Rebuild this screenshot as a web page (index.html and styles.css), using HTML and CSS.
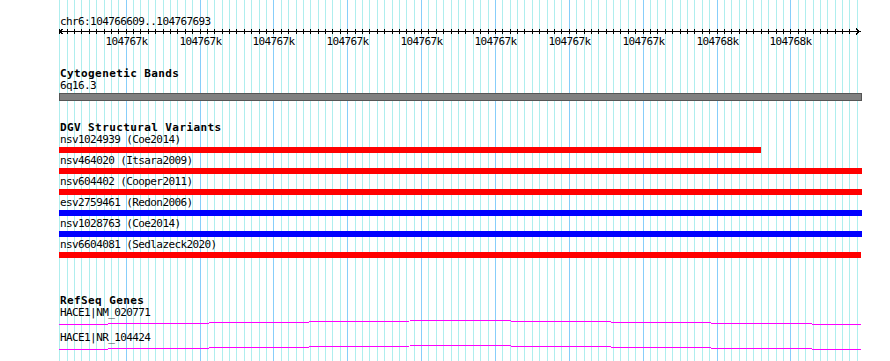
FILE: index.html
```html
<!DOCTYPE html>
<html lang="en">
<head>
    <meta charset="UTF-8">
    <title>chr6:104766609..104767693</title>
    <link rel="stylesheet" href="styles.css">
</head>
<body>
    <div class="panel" id="panel">
        <svg class="grid" id="grid" width="803" height="361"></svg>

        <div class="ruler">
            <div class="ruler-title">chr6:104766609..104767693</div>
            <svg class="axis" id="axis" width="803" height="22"></svg>
        </div>

        <section class="track track-cyto">
            <h2 class="track-title">Cytogenetic Bands</h2>
            <div class="feature">
                <div class="feature-label">6q16.3</div>
                <div class="band"></div>
            </div>
        </section>

        <section class="track track-dgv">
            <h2 class="track-title">DGV Structural Variants</h2>
            <div class="feature">
                <div class="feature-label">nsv1024939 (Coe2014)</div>
                <div class="bar bar-loss" style="width: 702px"></div>
            </div>
            <div class="feature">
                <div class="feature-label">nsv464020 (Itsara2009)</div>
                <div class="bar bar-loss" style="width: 803px"></div>
            </div>
            <div class="feature">
                <div class="feature-label">nsv604402 (Cooper2011)</div>
                <div class="bar bar-loss" style="width: 803px"></div>
            </div>
            <div class="feature">
                <div class="feature-label">esv2759461 (Redon2006)</div>
                <div class="bar bar-gain" style="width: 803px"></div>
            </div>
            <div class="feature">
                <div class="feature-label">nsv1028763 (Coe2014)</div>
                <div class="bar bar-gain" style="width: 803px"></div>
            </div>
            <div class="feature">
                <div class="feature-label">nsv6604081 (Sedlazeck2020)</div>
                <div class="bar bar-loss" style="width: 802px"></div>
            </div>
        </section>

        <section class="track track-refseq">
            <h2 class="track-title">RefSeq Genes</h2>
            <div class="feature">
                <div class="feature-label">HACE1|NM_020771</div>
                <svg class="intron" width="802" height="13">
                    <polyline points="0,5.5 401,1.5 802,5.5"></polyline>
                </svg>
            </div>
            <div class="feature">
                <div class="feature-label">HACE1|NR_104424</div>
                <svg class="intron" width="802" height="13">
                    <polyline points="0,5.5 401,1.5 802,5.5"></polyline>
                </svg>
            </div>
        </section>
    </div>

    <script src="script.js"></script>
</body>
</html>
```

FILE: styles.css
```css
* {
    box-sizing: border-box;
}

body {
    margin: 0;
    background-color: #fff;
    color: #000;
    font-family: "DejaVu Sans Mono", "Liberation Mono", monospace;
    font-size: 11px;
    letter-spacing: -0.6px;
    overflow: hidden;
}

.panel {
    position: relative;
    width: 803px;
    height: 361px;
    margin-left: 59px;
}

/* grid lines sit behind all tracks */
.grid {
    position: absolute;
    top: 0;
    left: 0;
    z-index: 0;
}

.grid line {
    stroke-width: 1;
    shape-rendering: crispEdges;
}

.grid .minor {
    stroke: #afeeee;
}

.grid .major {
    stroke: #87cefa;
}

.ruler,
.track {
    position: relative;
    z-index: 1;
}

.ruler-title {
    padding-top: 16px;
    padding-left: 1px;
    line-height: 12px;
}

.axis {
    display: block;
}

.axis line,
.axis polyline {
    stroke: #000;
    stroke-width: 1;
    fill: none;
    shape-rendering: crispEdges;
}

.axis text {
    font-family: "DejaVu Sans Mono", "Liberation Mono", monospace;
    font-size: 11px;
    letter-spacing: -0.6px;
    fill: #000;
}

.track-title {
    margin: 0;
    padding-left: 1px;
    font-size: 11px;
    font-weight: bold;
    letter-spacing: 0.4px;
    line-height: 12px;
}

.track-cyto {
    margin-top: 18px;
}

.track-dgv {
    margin-top: 21px;
}

.track-refseq {
    margin-top: 37px;
}

.feature-label {
    padding-left: 1px;
    line-height: 12px;
    white-space: nowrap;
}

.band {
    width: 803px;
    height: 8px;
    margin-top: 1px;
    background-color: #808080;
    border: 1px solid #555;
}

.bar {
    height: 6px;
    margin-top: 1px;
    margin-bottom: 2px;
}

.bar-loss {
    background-color: #ff0000;
}

.bar-gain {
    background-color: #0000ff;
}

.intron {
    display: block;
}

.intron polyline {
    fill: none;
    stroke: #ff00ff;
    stroke-width: 1;
    shape-rendering: crispEdges;
}
```

FILE: script.js
```javascript
// Region shown in the panel
var regionStart = 104766609;
var regionEnd = 104767693;
var pxPerBase = 0.7385;
var svgNS = 'http://www.w3.org/2000/svg';

function el(name, attrs, parent) {
    var node = document.createElementNS(svgNS, name);
    for (var key in attrs) {
        node.setAttribute(key, attrs[key]);
    }
    parent.appendChild(node);
    return node;
}

function toX(bp) {
    return Math.floor((bp - regionStart) * pxPerBase) + 0.5;
}

var grid = document.getElementById('grid');
var axis = document.getElementById('axis');
var width = 803;

// axis line with arrow heads
el('line', { x1: 0, y1: 3.5, x2: width - 1, y2: 3.5 }, axis);
el('polyline', { points: '4.5,0.5 0.5,3.5 4.5,6.5' }, axis);
el('polyline', { points: (width - 6) + ',0.5 ' + (width - 2) + ',3.5 ' + (width - 6) + ',6.5' }, axis);

// minor ticks every 10 bp, major every 100 bp
var first = Math.ceil(regionStart / 10) * 10;
for (var bp = first; bp <= regionEnd; bp += 10) {
    var x = toX(bp);
    var major = bp % 100 === 0;

    el('line', { x1: x, y1: 0, x2: x, y2: 361, 'class': major ? 'major' : 'minor' }, grid);
    el('line', { x1: x, y1: 1, x2: x, y2: 6 }, axis);

    if (major) {
        var label = el('text', { x: x, y: 17, 'text-anchor': 'middle' }, axis);
        label.textContent = Math.round(bp / 1000) + 'k';
    }
}
```
